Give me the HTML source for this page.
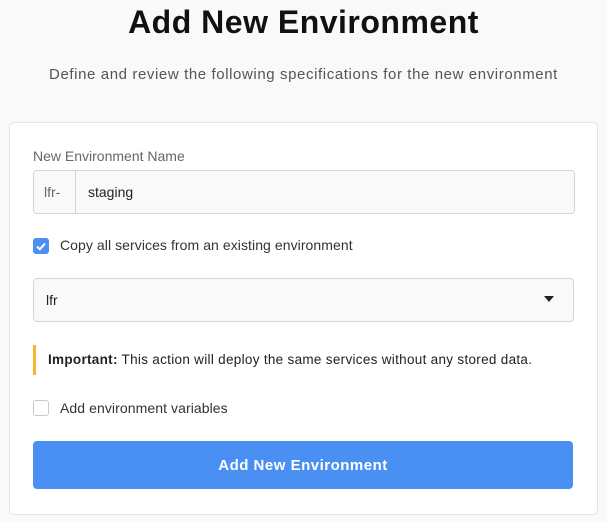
<!DOCTYPE html>
<html><head><style>
body{margin:0;width:607px;height:522px;background:#f9f9f9;font-family:"Liberation Sans",sans-serif;position:relative;overflow:hidden;color:#222}
.a{position:absolute}
h1{position:absolute;top:-1px;left:0;width:607px;text-align:center;margin:0;font-size:32px;font-weight:bold;color:#111;line-height:46px;letter-spacing:0.5px}
.sub{top:66px;left:0;width:607px;text-align:center;font-size:15px;color:#555;letter-spacing:0.6px}
.card{left:9px;top:122px;width:587px;height:391px;background:#fff;border:1px solid #e4e4e4;border-radius:5px}
.box{border:1px solid #d4d4d4;border-radius:4px;background:#f9f9f9;box-sizing:border-box}
</style></head><body>
<h1>Add New Environment</h1>
<div class="a sub">Define and review the following specifications for the new environment</div>
<div class="a card"></div>
<div class="a" style="left:33px;top:148px;font-size:14px;color:#666">New Environment Name</div>
<div class="a box" style="left:33px;top:170px;width:542px;height:44px"></div>
<div class="a" style="left:75px;top:171px;width:1px;height:42px;background:#d4d4d4"></div>
<div class="a" style="left:44px;top:184px;font-size:14px;color:#666">lfr-</div>
<div class="a" style="left:88px;top:184px;font-size:14px;color:#222">staging</div>
<div class="a" style="left:33px;top:238px;width:16px;height:16px;background:#4a8ff2;border-radius:3px"><svg width="16" height="16"><path d="M4 8.5l2.8 2.8L12 5.5" stroke="#fff" stroke-width="2" fill="none"/></svg></div>
<div class="a" style="left:60px;top:237px;font-size:14px;color:#333;letter-spacing:0.07px">Copy all services from an existing environment</div>
<div class="a box" style="left:33px;top:278px;width:541px;height:44px"></div>
<div class="a" style="left:46px;top:292px;font-size:14px;color:#222">lfr</div>
<div class="a" style="left:544px;top:296px;width:0;height:0;border-left:5px solid transparent;border-right:5px solid transparent;border-top:6px solid #222"></div>
<div class="a" style="left:33px;top:345px;width:3px;height:30px;background:#f5b731"></div>
<div class="a" style="left:48px;top:352px;font-size:13.5px;color:#222;letter-spacing:0.3px"><b>Important:</b> This action will deploy the same services without any stored data.</div>
<div class="a" style="left:33px;top:400px;width:14px;height:14px;border:1px solid #c8c8c8;border-radius:3px;background:#fff"></div>
<div class="a" style="left:60px;top:400px;font-size:14px;color:#333;letter-spacing:0.08px">Add environment variables</div>
<div class="a" style="left:33px;top:441px;width:540px;height:48px;background:#4a8ff2;border-radius:4px;color:#fff;font-weight:bold;font-size:15px;text-align:center;line-height:50px;letter-spacing:0.5px">Add New Environment</div>
</body></html>
